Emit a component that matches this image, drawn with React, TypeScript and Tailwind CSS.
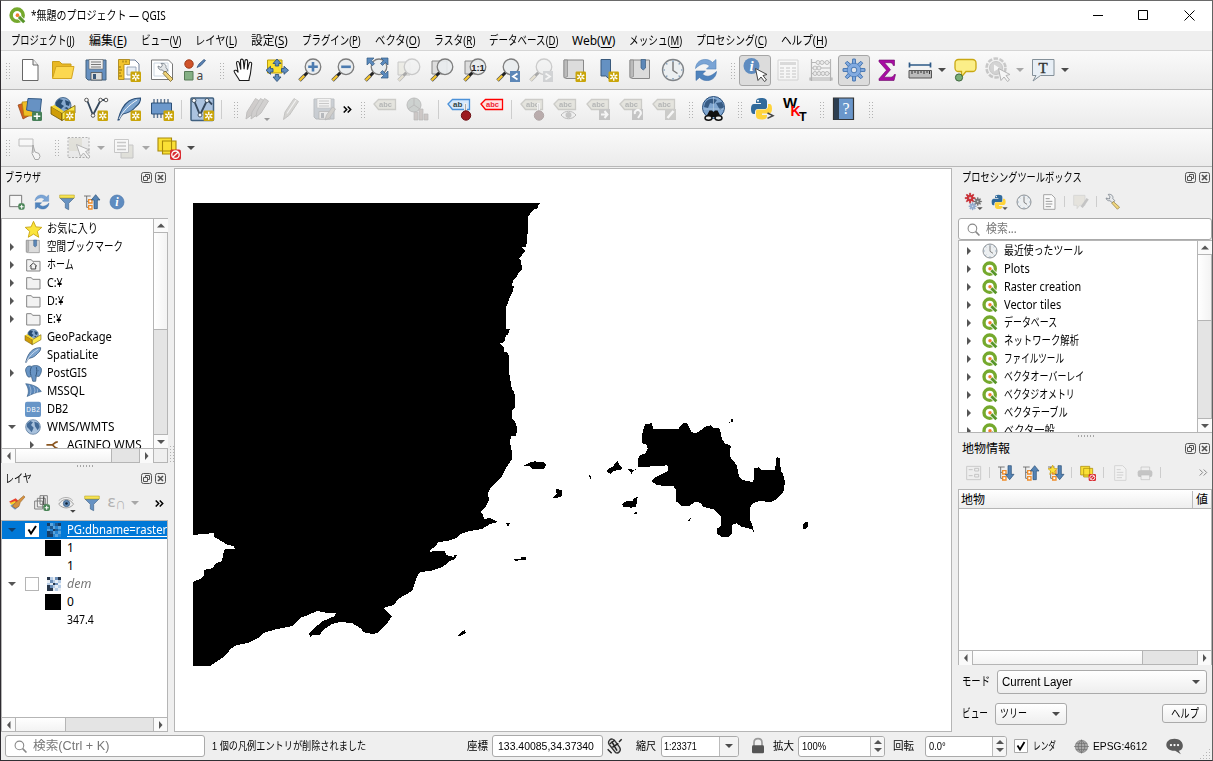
import { useLayoutEffect, useRef, useState } from 'react';
import type { ReactNode } from 'react';

/* Text squeezed or stretched horizontally to a given width, like narrow UI kana. */
function Fit({ w, children, className = '' }: { w: number; children: ReactNode; className?: string }) {
  const ref = useRef<HTMLSpanElement>(null);
  const [scale, setScale] = useState(1);
  useLayoutEffect(() => {
    if (ref.current) setScale(w / ref.current.offsetWidth);
  }, [w]);
  return (
    <span className={`inline-flex shrink-0 whitespace-nowrap ${className}`} style={{ width: w }}>
      <span ref={ref} className="inline-block shrink-0 origin-left" style={{ transform: `scaleX(${scale})` }}>
        {children}
      </span>
    </span>
  );
}

type IconProps = { children: ReactNode; s?: number; dim?: boolean };
function Ic({ children, s = 24, dim }: IconProps) {
  return (
    <svg viewBox="0 0 24 24" width={s} height={s} fill="none" className={`shrink-0 overflow-visible ${dim ? 'opacity-35 grayscale-[70%]' : ''}`}>
      {children}
    </svg>
  );
}

const Badge = () => (
  <g>
    <rect x="13.500" y="13.500" width="10.500" height="10.500" rx="1.2" fill="#c9a50a" />
    <path d="M18.750 14.800v8M15.300 16.800l7 4M22.300 16.800l-7 4" stroke="#fff" strokeWidth="1.400" />
    <circle cx="18.750" cy="18.800" r="1" fill="#c9a50a" />
  </g>
);

const Lens = ({ children, x = 15 }: { children?: ReactNode; x?: number }) => (
  <g transform={`translate(${x - 15} 0)`}>
    <path d="M9.5 14.5L6 18" stroke="#222" strokeWidth="3" />
    <path d="M6.5 17.5L1.5 22.5" stroke="#555" strokeWidth="3.6" />
    <path d="M6.2 17.7L1.7 22.2" stroke="#f6c62d" strokeWidth="2.2" />
    <circle cx="15" cy="8.8" r="7.8" fill="#e9ecee" fillOpacity=".9" stroke="#7d7d7d" strokeWidth="1.3" />
    {children}
  </g>
);

const NewDoc = () => <Ic><path d="M4.5 1.5h10.5l5 5.5v15.500h-15.500z" fill="#fff" stroke="#666" /><path d="M15 1.500V7h5" stroke="#666" fill="#eee" /></Ic>;
const OpenDir = () => <Ic><path d="M1.500 20V3.500h7l2.500 2.500h9V11" fill="#e9b824" stroke="#c79d1c" /><path d="M1.500 20.500L5 8.500h18L20.500 20.500z" fill="#fcd850" stroke="#d3a521" /></Ic>;
const SaveIc = ({ dim = false, pencil = false }) => <Ic dim={dim}><path d="M2 2h20v20H4l-2-2z" fill="#6690c0" stroke="#44627f" /><path d="M5 1.500h14v9.500H5z" fill="#eee" stroke="#666" strokeWidth=".6" /><path d="M7 4h10M7 6.500h10M7 9h10" stroke="#777" /><path d="M7 14.500h11v7.500H7z" fill="#ddd" stroke="#444" strokeWidth=".7" /><path d="M9 16h3v5H9z" fill="#3c5878" />{pencil && <path d="M13 23l1.500-5 6-8 3 2-6 9z" fill="#a09070" stroke="#555" strokeWidth=".8" />}</Ic>;
const NewLayout = () => <Ic><path d="M2 2h16l4 4v15H2z" fill="#fff" stroke="#6f7f98" /><path d="M1.500 1.500h11v5H7v15H1.500z" fill="#f2c42c" stroke="#a98412" strokeWidth=".8" /><path d="M10 9h9v8h-9z" fill="#e8eef5" stroke="#8595ab" strokeWidth=".8" /><path d="M2 9h2M2 12h3M2 15h2M2 18h3M6 2.500v2M9 2.500v2" stroke="#7a5e08" strokeWidth=".8" /><Badge /></Ic>;
const Wrench = ({ s = 24 }) => <Ic s={s}><path d="M3 7l4.500 1.500 1-3L6 2c4-1 7.500 2 6.500 6l3 3-3.500 3-3.500-3C5 11.500 3 9 3 7z" fill="#e8eaec" stroke="#6d7680" /><path d="M13 12l9 8-3 3-8-8.500z" fill="#f0d67e" stroke="#85702d" strokeWidth=".9" /></Ic>;
const LayoutMgr = () => <Ic><path d="M1.500 2h17l4 4v15.500h-21z" fill="#fff" stroke="#777" /><path d="M4 5h14v13H4z" stroke="#ccd6e0" /><path d="M8 8l3 1.500L12.500 7 11 5.500c3-.5 5.500 1 5 4l2 3-3.500 2-2-2.500C9.500 12.500 8 10.500 8 8z" fill="#e3e6e8" stroke="#6d7680" strokeWidth=".8" /><path d="M15 13l8 8-2.500 2.500-7.500-8z" fill="#efd277" stroke="#72602a" strokeWidth=".8" /></Ic>;
const StyleMgr = () => <Ic><circle cx="6" cy="6" r="4.200" fill="#d0532a" stroke="#9d3a18" /><path d="M14 9.500l2-3.500 5-4.500 1.500 1-4.500 5z" fill="#5a82b4" stroke="#34577f" strokeWidth=".8" /><path d="M1.500 13.500h8.500V22H1.500z" fill="#85b085" stroke="#567a56" /><text x="13.500" y="22" fontSize="12" fill="#444" fontFamily="Noto Sans">a</text></Ic>;
const Hand = () => <Ic><path d="M7.500 22.500C6 19 2.500 15.500 2 13c1-1.500 3-.8 4.200 1.500L4.500 5c0-1.800 2.200-2 2.700-.3l1.600 6.800L8.500 2.500c0-1.800 2.500-1.900 2.800 0l.8 8.600L13 2.800c.2-1.700 2.500-1.600 2.600.2l-.2 8.700 1.800-6.500c.5-1.500 2.700-1.100 2.500.6L18.500 15c-.3 3-1.500 5-1.500 7.500z" fill="#fff" stroke="#1a1a1a" strokeWidth="1.100" /></Ic>;
const PanSel = () => <Ic><path d="M2.500 2h14.500v13H2.500z" fill="#fbe02c" stroke="#bd9d0b" /><path d="M12 1l4 4.500h-2.300V8h-3.400V5.500H8zM12 23.500l-4-4.500h2.300v-2.500h3.400V19H16zM1 12.300l4.500-4v2.300H8V14H5.500v2.300zM23.500 12.300l-4.500-4v2.300h-2.500V14H19v2.300z" fill="#5f8dbf" stroke="#2f5379" strokeWidth=".9" /></Ic>;
const ZoomIn = () => <Ic><Lens><path d="M15 4v9.600M10.200 8.800h9.600" stroke="#4b7bb0" strokeWidth="2.600" /></Lens></Ic>;
const ZoomOut = () => <Ic><Lens><path d="M10.200 8.800h9.600" stroke="#4b7bb0" strokeWidth="2.600" /></Lens></Ic>;
const ZoomFull = () => <Ic><Lens /><path d="M3 0h7L7.500 2.700l3 3-2 2-3-3L3 7zM24 0v7l-2.500-2.500-3 3-2-2 3-3L17 0zM24 20h-7l2.500-2.500-3-3 2-2 3 3L24 13z" fill="#5b8abd" stroke="#315982" strokeWidth=".7" /></Ic>;
const ZoomSel = () => <Ic dim><path d="M1 4h12v13H1z" fill="#e3dfa5" stroke="#777" /><Lens /></Ic>;
const ZoomLayer = () => <Ic><path d="M2 3h15v13H2z" fill="#ddd" stroke="#888" /><Lens /></Ic>;
const ZoomNative = () => <Ic><path d="M2 3h15v13H2z" fill="#ddd" stroke="#888" /><Lens /><text x="15" y="12.500" fontSize="9.500" fontWeight="700" textAnchor="middle" fill="#222" fontFamily="Liberation Sans">1:1</text></Ic>;
const ZoomLast = () => <Ic><Lens /><path d="M14 13h10v11H14z" fill="#5d87b7" /><path d="M21.500 15.500L17 18.500l4.500 3" stroke="#fff" strokeWidth="1.800" /></Ic>;
const ZoomNext = () => <Ic dim><Lens /><path d="M14 13h10v11H14z" fill="#8fa0b0" /><path d="M16.500 15.500l4.500 3-4.500 3" stroke="#fff" strokeWidth="1.800" /></Ic>;
const MapBook = ({ s = 24, badge = false, mark = false }) => <Ic s={s}><path d="M2 2h19.500v18.500H5c-2 0-3-1-3-2.500z" fill="#dcdcdc" stroke="#888" /><path d="M2 2h3.500v16.500L2 20z" fill="#bbb" stroke="#888" strokeWidth=".7" />{mark && <path d="M13 1.500h4.500v8.500L15.200 12 13 10z" fill="#5c87b7" stroke="#385b80" strokeWidth=".7" />}{badge && <Badge />}</Ic>;
const NewBookmark = () => <Ic><path d="M6 1.500h9.500v20.500L10.700 18 6 18z" fill="#6591c2" stroke="#39597c" /><Badge /></Ic>;
const Clock = ({ s = 24 }) => <Ic s={s}><circle cx="12" cy="12" r="10.500" fill="#eceff1" stroke="#808488" strokeWidth="1.300" /><path d="M12 4v8.500l4.500 3" stroke="#777" strokeWidth="1.400" /><path d="M12 2.500v1.500M12 20v1.500M2.500 12H4M20 12h1.500M5.300 5.300l1 1M17.700 17.700l1 1M18.700 5.300l-1 1M5.300 18.700l1-1" stroke="#68a" strokeWidth="1.200" /></Ic>;
const Refresh = ({ s = 24 }) => <Ic s={s}><path d="M1.500 10.500C2 4 7 1 12 1.500c3 .2 5 1.500 6.500 3L22 1.500v9.500h-9.500L15.500 8C12 4.500 7 5 1.500 10.500z" fill="#7aa4d5" stroke="#5484ba" strokeWidth=".6" /><path d="M22.500 13.500C22 20 17 23 12 22.500c-3-.2-5-1.500-6.500-3L2 22.500V13h9.500L8.500 16C12 19.500 17 19 22.500 13.500z" fill="#4f83bd" stroke="#3e6fa8" strokeWidth=".6" /></Ic>;
const Cursor = () => <path d="M12.500 10.500l2.500 12 3-3.500 3.500 4.500 2-1.500-3.500-4.500 4-1z" fill="#fff" stroke="#444" />;
const Identify = () => <Ic><circle cx="8.500" cy="8" r="8" fill="#5f8cc0" /><text x="8.500" y="13" fontSize="15" fontStyle="italic" fontWeight="700" textAnchor="middle" fill="#fff" fontFamily="Liberation Serif">i</text><Cursor /></Ic>;
const TableIc = () => <Ic dim><path d="M2 2h20v20H2z" fill="#fff" stroke="#999" /><path d="M4 4h16v3H4z" fill="#aaa" /><path d="M4 10h4M10 10h4M16 10h4M4 13h4M10 13h4M16 13h4M4 16h4M10 16h4M16 16h4M4 19h4M10 19h4M16 19h4" stroke="#777" strokeWidth="1.200" /></Ic>;
const Abacus = () => <Ic dim><path d="M2.500 1v22M21.500 1v22M1 22h22v-2H1zM2.500 4.500h19M2.500 10h19M2.500 15.500h19" stroke="#444" strokeWidth="1.200" />{[[9, 4.500], [13, 4.500], [18, 4.500], [6, 10], [10, 10], [6, 15.500], [10, 15.500], [14, 15.500], [18, 15.500]].map(([x, y]) => <circle key={`${x}-${y}`} cx={x} cy={y} r="2" fill="#ddd" stroke="#555" />)}</Ic>;
const Gear = ({ fill = '#83abe0', stroke = '#3d6fae' }) => (
  <g>
    {[0, 45, 90, 135, 180, 225, 270, 315].map((a) => <path key={a} d="M10.300 6l.4-5h2.600l.4 5z" fill={fill} stroke={stroke} strokeWidth=".9" transform={`rotate(${a} 12 12)`} />)}
    <circle cx="12" cy="12" r="6.800" fill={fill} stroke={stroke} strokeWidth=".6" />
    <circle cx="12" cy="12" r="2.800" fill="#e2e5ea" stroke={stroke} strokeWidth=".9" />
  </g>
);
const Sigma = () => <Ic><path d="M4 2h15.500v5.500h-1.300C17.700 5.500 17 4.700 15 4.700H9.500l6 7-6.500 7.500h6.500c2 0 3-.8 3.700-2.700h1.300L19 22.500H4v-1.700l7.500-8.600L4 3.700z" fill="#a80ca2" stroke="#6b0a68" strokeWidth=".6" /></Ic>;
const Measure = () => <Ic><path d="M1.500 4.500v5M22.500 4.500v5M2 7h20" stroke="#2d5986" strokeWidth="1.700" /><path d="M1 12.500h22.500v7.500H1z" fill="#bbb" stroke="#555" /><path d="M4 13v3M7 13v2M10 13v3M13 13v2M16 13v3M19 13v2M21.500 13v3" stroke="#333" /></Ic>;
const Tip = () => <Ic><path d="M5.500 1.500h14a3.500 3.500 0 013.500 3.500v5a3.500 3.500 0 01-3.500 3.500H13L8.500 19v-5.500h-3A3.500 3.500 0 012 10V5a3.500 3.500 0 013.500-3.500z" fill="#fbee88" stroke="#c9a812" strokeWidth="1.300" /><circle cx="6" cy="19.500" r="3.600" fill="#7aae78" stroke="#3c663c" /></Ic>;
const Action = () => <Ic dim><g transform="translate(-2 -2)"><circle cx="12" cy="12" r="9.500" fill="#e6e6e6" stroke="#777" strokeWidth="2.500" strokeDasharray="4.500 1.500" /><circle cx="12" cy="12" r="6.500" fill="#999" stroke="#777" /><path d="M10 8.500v7l5.500-3.500z" fill="#fff" /></g><Cursor /></Ic>;
const TextAnn = () => <Ic><path d="M1.500 1.500h21.500v16H9.500L2 23l3-5.500H1.500z" fill="#e8eff6" stroke="#849099" /><text x="12.200" y="15" fontSize="15" textAnchor="middle" fill="#333" stroke="#333" strokeWidth=".4" fontFamily="Liberation Serif">T</text></Ic>;

const AddLayers = () => <Ic><path d="M0 8l9-3 5 12-9 5z" fill="#d4611f" stroke="#8e4015" strokeWidth=".7" /><path d="M4 5l13-1 1 15H6z" fill="#efbe25" stroke="#a97f0b" strokeWidth=".7" /><path d="M10 1.500l13.500.5-1.500 14L8.500 13z" fill="#6792c3" stroke="#345a84" /><rect x="14" y="14.500" width="10" height="9.500" rx="1.500" fill="#468058" /><path d="M19 16v6.500M15.700 19.200h6.600" stroke="#fff" strokeWidth="1.500" /></Ic>;
const GeoPkg = ({ s = 24, badge = false }) => <Ic s={s}><circle cx="12" cy="8.500" r="8" fill="#87a9cf" stroke="#30557c" strokeWidth=".8" /><path d="M5 5l3-3 4 1-2 4 3 2-3 3-5-3zM14 3l5 2-1 4-3-1zM13 11l3-1 2 3z" fill="#284c72" /><path d="M0 9.500l11 6.500v7.500L0 17z" fill="#cf9d08" stroke="#6d5306" strokeWidth=".8" /><path d="M24 8.500l-13 7.500v7.500L24 16z" fill="#fbe94c" stroke="#6d5306" strokeWidth=".8" /><path d="M0 9.500L3.500 8 13 14.500 11 16z" fill="#f5d62e" />{badge && <Badge />}</Ic>;
const VectorV = () => <Ic><path d="M3 3l6 15L16.500 3.500M17 3h4.500" stroke="#34475c" strokeWidth="1.800" />{[[2.500, 3], [9, 18.500], [16.500, 3], [22, 3]].map(([x, y]) => <circle key={x} cx={x} cy={y} r="1.800" fill="#fff" stroke="#555" />)}<Badge /></Ic>;
const VirtualV = () => <Ic><rect x="1" y="1" width="22.500" height="22.500" rx="1" fill="#abc3e0" stroke="#40607f" strokeWidth="1.500" /><path d="M4 3.500l6 14.500 7-14.500c2 0 3 2 5 4" stroke="#34475c" strokeWidth="1.900" />{[[4, 3.500], [10, 18], [17, 3.500]].map(([x, y]) => <circle key={x} cx={x} cy={y} r="2" fill="#fff" stroke="#456" />)}<Badge /></Ic>;
const Feather = ({ s = 24, badge = false }) => <Ic s={s}><path d="M1 23C3 15 6 8 12 4c4-2.500 8-3 11.500-3C24 5 21 8 18.500 10c-4 5-8 6-12.500 7-2 1.500-3 4-4 6z" fill="#7ba3ce" stroke="#2c4f77" strokeWidth="1.100" /><path d="M2 22C6 14 12 8 20 3" stroke="#fff" strokeWidth=".9" />{badge && <Badge />}</Ic>;
const Chip = () => <Ic><path d="M4 2v19M7.500 2v19M11 2v19M14.500 2v19M18 2v19" stroke="#5a7390" strokeWidth="1.400" /><path d="M1.500 6h20v11h-20z" fill="#6c98cb" stroke="#2d5077" /><Badge /></Ic>;
const Pencil = ({ x = 0 }) => <g transform={`translate(${x} 0)`}><path d="M4.500 22.500l1.500-7.500L15 1.500l4.500 3L10.500 18z" fill="#a39c84" stroke="#6a665a" strokeWidth=".9" /><path d="M8 16.500L17 3" stroke="#eee" strokeWidth="1.200" /></g>;
const Pencils = () => <Ic dim><g strokeLinejoin="round"><path d="M0 22l1-7L9.500 1.500l4 2.500L5.500 18z" fill="#9b8078" stroke="#6a605a" /><path d="M5 22l1-7L14.500 1.500l4 2.500-8 14z" fill="#9b8f88" stroke="#6a605a" /><path d="M10 20l1-6L18.500 1.500l4 2.500-7.500 12z" fill="#9b8f88" stroke="#6a605a" /></g><path d="M18 21h6l-3 3z" fill="#000" /></Ic>;
const LabelTag = ({ red = false, blue = false, dim = false, children }: { red?: boolean; blue?: boolean; dim?: boolean; children?: ReactNode }) => (
  <Ic dim={dim}>
    <path d="M1 7l4.500-4.500h17v10H5.500z" fill={red ? '#ffe0e0' : blue ? '#d6e8fb' : '#cdca8f'} stroke={red ? '#f00' : blue ? '#4b91d8' : '#85825e'} strokeWidth="1.300" />
    <text x="6" y="10" fontSize={blue ? 8 : 7.5} fontWeight="700" fill={red ? '#e23' : '#344'} fontFamily="Liberation Sans">{blue ? 'ab' : 'abc'}</text>
    {children}
  </Ic>
);
const Pie = () => <Ic dim><circle cx="8" cy="8" r="7" fill="#6f9a83" stroke="#555" /><path d="M8 8V1M8 8l-6 4M8 8l6 4" stroke="#555" /><path d="M8 15h4v8H8zM13 12h4v11h-4zM18 17h4v6h-4z" fill="#a76" stroke="#555" strokeWidth=".7" /></Ic>;
const PinBall = () => <g><path d="M18.500 14V6" stroke="#eee" strokeWidth="3" /><path d="M18.500 14V7" stroke="#999" strokeWidth=".8" /><circle cx="19" cy="18.500" r="4.700" fill="#9d1b20" stroke="#6b1014" /></g>;
const Bino = () => <Ic><circle cx="12.500" cy="10.500" r="11" fill="#7fa5cf" stroke="#294d78" /><path d="M4 6c3-5 8-5 12-3l-3 4-4-1-2 5-4-1zM15 6l6-1 2 5-4 3z" fill="#375b84" /><path d="M2 12h21M12.500 0v14" stroke="#bcd1e6" strokeWidth=".6" /><path d="M4.500 21l4-7.500h2.500l1.500 1.500 1.500-1.500h2.500l4 7.500-3 1-3-2h-4l-3 2z" fill="#111" /><ellipse cx="7.500" cy="21" rx="3.500" ry="2.200" fill="#eee" stroke="#111" strokeWidth="1.500" /><ellipse cx="17.500" cy="21" rx="3.500" ry="2.200" fill="#eee" stroke="#111" strokeWidth="1.500" /></Ic>;
const Python = ({ s = 24, prompt = false }) => <Ic s={s}><path d="M11 1c4 0 6 1 6 3.500V10c0 1.500-1 2-2.500 2H8c-2 0-3 1-3 3v2H3.500C1.500 17 1 14 1 11.500S2 7 4 7h7V6H6V4c0-2 2-3 5-3z" fill="#316a9b" /><path d="M12 22.500c-4 0-6-1-6-3.500v-4.500C6 13 7 12.500 8.500 12.500H15c2 0 3-1.500 3-3V7h1.500c2 0 2.500 2.500 2.500 5s-1 4.500-3 4.500h-7v1.500h5V19c0 2.500-2 3.500-5 3.500z" fill="#ffd43b" /><circle cx="8" cy="3.800" r="1" fill="#fff" />{prompt ? <path d="M17.500 16l5.500 2.700-5.500 2.700" stroke="#444" strokeWidth="1.500" /> : <path d="M17 20h8l-4 4z" fill="#555" />}</Ic>;
const Wkt = () => <Ic><g fontFamily="Liberation Sans" fontWeight="700"><text x="0" y="10.500" fontSize="15" fill="#000">W</text><text x="7.500" y="18.500" fontSize="14" fill="#f00">K</text><text x="16" y="23.500" fontSize="12.500" fill="#000">T</text></g></Ic>;
const Book = () => <Ic><path d="M1.500 1h20v21.500h-20z" fill="#6a96ca" stroke="#333" strokeWidth="1.200" /><path d="M2 1h5v21.500H2z" fill="#2d3e50" /><text x="14" y="17" fontSize="16" textAnchor="middle" fill="#fff" fontFamily="Liberation Serif">?</text></Ic>;
const RectHand = () => <Ic dim><path d="M1 3h14v7H1z" fill="#fff" stroke="#555" /><path d="M15 9v8M15 9l2 7 4 1.500 1 3-1.500 3H17l-3-6z" stroke="#222" fill="#fff" /></Ic>;
const SelectIc = () => <Ic dim><path d="M1 1.500h21v20H1z" fill="#ddd" stroke="#333" strokeDasharray="2 1.500" /><path d="M2 2h13v13H2z" fill="#c4c080" /><path d="M9.500 8.500l4 12 3-3.500 4.500 5.500 2-1.500-4.500-5.500 4-1.500z" fill="#fff" stroke="#444" /></Ic>;
const FormSel = () => <Ic dim><path d="M9 9h12v13H9z" fill="#c9c58a" stroke="#777" /><path d="M2.500 3.500h14v13h-14z" fill="#fff" stroke="#777" /><path d="M5 6.500h9M5 10h9M5 13.500h9" stroke="#777" strokeWidth="1.500" /></Ic>;
const Deselect = ({ s = 24 }) => <Ic s={s}><path d="M1 2h13.500v13H1zM5.500 5h13.500v13H5.500z" fill="#fae035" stroke="#a88909" strokeWidth="1.100" /><rect x="13" y="13.500" width="11" height="10.500" rx="2" fill="#d92b31" /><circle cx="18.500" cy="18.700" r="3.700" stroke="#fff" strokeWidth="1.300" /><path d="M16 21l5-4.700" stroke="#fff" strokeWidth="1.300" /></Ic>;

const Folder = ({ home = false }) => <Ic s={16}><path d="M2.500 4h7l2 2.500h11v14.500H2.500z" fill="#f2f2f2" stroke="#858585" strokeWidth="1.500" />{home && <path d="M7 14l5.500-5 5.500 5M9 13v5h7v-5" stroke="#444" strokeWidth="1.500" />}</Ic>;
const Star = () => <Ic s={17}><path d="M12 .5l3.400 7.800 8.300.7-6.300 5.600 2 8.400L12 18.500 4.600 23l2-8.400L.3 9l8.300-.7z" fill="#fbe53c" stroke="#c9a50f" strokeWidth="1.300" /></Ic>;
const Elephant = () => <Ic s={17}><path d="M1 9C0 3 5 0 9 2c5-2 11-2 14 3 1 4-1 8-3 11h-4l-1 7h-4l-2-7c-3 2-5 1-6-1z" fill="#6894c4" stroke="#2f5378" /><path d="M9 3c-2 4-2 8-.5 12M16 3c1 4 1 9-1 13M18 8h1" stroke="#2f5378" strokeWidth="1.300" /></Ic>;
const Mssql = () => <Ic s={17}><path d="M1 1c9 1 18 4 22 11-7 1-14 4-20 7 3-6 2-12-2-18z" fill="#5a87b9" stroke="#44698f" /><path d="M6 3c3 5 3 10 1 14M12 5c3 4 2 7 1 10M17 8c1 2 1 4 0 6" stroke="#b9cde4" /></Ic>;
const Db2 = () => <Ic s={16}><rect x="0" y="1" width="24" height="23" rx="3" fill="#6795c7" /><text x="12" y="16" fontSize="9.500" textAnchor="middle" fill="#fff" fontFamily="Liberation Sans" textLength="20">DB2</text></Ic>;
const Globe = ({ s = 16 }) => <Ic s={s}><circle cx="12" cy="12" r="11" fill="#a8c1dc" stroke="#47698f" /><path d="M3 7l5-4 4 2-3 4 4 4-3 7-4-5-3-3zM14 4l6 2 2 6-3 5-4-6z" fill="#426a97" /></Ic>;
const Wire = () => <Ic s={17}><path d="M2 11h8c2 0 3-4 8-4M10 11c2 0 3 5 8 5" stroke="#8a5620" strokeWidth="2.400" /></Ic>;
const QLogo = ({ s = 17 }) => <Ic s={s}><circle cx="11.500" cy="11.500" r="8.500" stroke="#75a92d" strokeWidth="5" /><path d="M13.500 13.500l8 8" stroke="#fff" strokeWidth="6.500" /><path d="M14 14l7.500 7.500" stroke="#579529" strokeWidth="4.300" /><circle cx="12" cy="11.500" r="2.600" fill="#ef7f2e" /></Ic>;
const RasterIc = ({ blue = false }) => <svg width="14" height="14" viewBox="0 0 20 20" className="shrink-0" shapeRendering="crispEdges">{['01320', '32131', '13023', '02131', '00313'].map((row, y) => row.split('').map((c, x) => <rect key={`${x}${y}`} x={x * 4} y={y * 4} width="4" height="4" fill={(blue ? ['#173c63', '#5ba4dc', '#1d5992', '#2484d2'] : ['#27364a', '#b7cce5', '#6d8fb8', '#e8eef5'])[Number(c)]} />))}</svg>;
const Funnel = () => <Ic s={16}><path d="M1.500 6h21l-8 8v9.500l-5-2.500v-7z" fill="#6792c2" stroke="#44668b" /><path d="M1 1.500h22v4.500H1z" fill="#f6e354" stroke="#af9b23" strokeWidth=".8" /></Ic>;
const TreeArrow = ({ down = false, star = false }) => <Ic s={16}><path d="M0 3h10M4 3v17h6M4 11h6" stroke="#666" strokeWidth="1.300" /><path d="M7 8.500h5v5H7zM7 17.500h5v5H7z" fill="#fff" stroke="#ef8d2b" strokeWidth="2" />{star && <path d="M7 0l2 5 5 .5-4 3.500 1.500 5L7 11l-4.500 3L4 9 0 5.500 5 5z" fill="#fce23a" stroke="#cc9d0c" />}{down ? <path d="M15 1h5v13h4l-6.500 8L11 14h4z" fill="#5583b4" stroke="#264b72" /> : <path d="M15 22V9h-4L17.500 1 24 9h-4v13z" fill="#5583b4" stroke="#264b72" />}</Ic>;
const Info = () => <Ic s={16}><circle cx="12" cy="12" r="10.500" fill="#5f8cc0" stroke="#4a76aa" /><text x="12" y="18.500" fontSize="18" fontStyle="italic" fontWeight="700" textAnchor="middle" fill="#fff" fontFamily="Liberation Serif">i</text></Ic>;
const AddBox = () => <Ic s={16}><path d="M1 2h18v17H1z" fill="#f6f6f6" stroke="#666" strokeWidth="1.300" /><rect x="14" y="14" width="9.500" height="9.500" rx="3" fill="#498456" /><path d="M19 16v6M16 19h6" stroke="#fff" strokeWidth="1.600" /></Ic>;
const Search = () => <Ic s={13}><circle cx="10" cy="10" r="8" stroke="#888" strokeWidth="2" /><path d="M16 16l7 7" stroke="#888" strokeWidth="3" /></Ic>;
const Brush = () => <Ic s={16}><path d="M0 10l10-5 6 6-7 6z" fill="#e8402e" /><path d="M1 12l8-3 4 5-6 4z" fill="#f6d02b" /><path d="M2 16l7-4 6 5-6 5z" fill="#6b95ca" /><path d="M9 12l5-4 8-7 2 2-7 8-2 6-5 3-5-3z" fill="#d7913e" stroke="#8d5f28" strokeWidth=".8" /></Ic>;
const GroupAdd = () => <Ic s={16}><path d="M1 9h12v12H1zM5 5h12v13H5zM9 1h11v13H9z" fill="#f1f1f1" stroke="#777" strokeWidth="1.400" /><path d="M14.500 2v13" stroke="#555" strokeWidth="2" /><rect x="14" y="14" width="10" height="10" rx="3" fill="#498456" /><path d="M19 16v6M16 19h6" stroke="#fff" strokeWidth="1.600" /></Ic>;
const Eye = () => <Ic s={17}><path d="M1 13c6-9 15-9 21 0-6 7-15 7-21 0z" fill="#eee" stroke="#999" strokeWidth="1.300" /><path d="M1 8c6-6 15-6 20 0" stroke="#aaa" strokeWidth="1.300" /><circle cx="12" cy="12" r="4.500" fill="#6088b3" stroke="#345a84" /><circle cx="12" cy="12" r="1.800" fill="#123" /><path d="M17 21h8l-4 4z" fill="#444" /></Ic>;
const Gears = () => <Ic s={17}><g transform="scale(.65) translate(-1 -1)"><Gear fill="#d22f35" stroke="#b3242b" /></g><g transform="translate(12 6) scale(.5)"><Gear fill="#777" stroke="#555" /></g><g transform="translate(5 13) scale(.48)"><Gear fill="#94add0" stroke="#7190b9" /></g><path d="M17 20h8l-4 4z" fill="#555" /></Ic>;
const PageIc = ({ dim = false }) => <Ic s={16} dim={dim}><path d="M4 1h12l5 5v17H4z" fill="#fafafa" stroke="#999" strokeWidth="1.300" /><path d="M7 7h6M7 11h10M7 15h10M7 19h8" stroke="#999" strokeWidth="1.500" /></Ic>;
const EditNote = () => <Ic s={16} dim><path d="M1 2h17v15H10l-4 5v-5H1z" fill="#ddd097" stroke="#999" /><path d="M13 20L22 7" stroke="#777" strokeWidth="4" /></Ic>;
const Form = () => <Ic s={16} dim><path d="M1 2h21v20H1z" fill="#eee" stroke="#888" strokeWidth="1.500" /><path d="M4 7h6M4 16h6M13 5h6v4h-6zM13 14h6v4h-6z" stroke="#777" strokeWidth="1.500" /></Ic>;
const Printer = () => <Ic s={16} dim><path d="M6 3h13v6H6z" fill="#eee" stroke="#666" /><rect x="1" y="8" width="22" height="10" rx="3" fill="#777" /><path d="M6 15h13v7H6z" fill="#eee" stroke="#666" /></Ic>;

function Handle() {
  return <span className="h-[17px] w-[5px] shrink-0 bg-[radial-gradient(circle,#b2b2b2_0.7px,transparent_0.9px)] bg-[length:3px_3px]" />;
}
const HandleSlot = ({ w = 'w-4' }: { w?: string }) => <span className={`flex shrink-0 justify-end pr-[3px] ${w}`}><Handle /></span>;
const Cell = ({ children }: { children: ReactNode }) => <span className="flex w-[33px] shrink-0 justify-center">{children}</span>;
const Sm = ({ children }: { children: ReactNode }) => <span className="flex w-[25px] shrink-0 justify-center">{children}</span>;
const Pressed = ({ children }: { children: ReactNode }) => <span className="flex w-[33px] shrink-0 justify-center"><span className="flex h-[31px] w-8 shrink-0 items-center justify-center rounded-[3px] border border-[#a6a6a6] bg-[#dcdcdc]">{children}</span></span>;
const Sep = ({ w = 'w-[7px]', small = false }: { w?: string; small?: boolean }) => <span className={`flex shrink-0 justify-center ${w}`}><span className={`w-px bg-[#cdcdcd] ${small ? 'h-[11px]' : 'h-[19px]'}`} /></span>;
const More = ({ dim = false }) => (
  <svg width="9" height="7" viewBox="0 0 9 7" fill="none" className="shrink-0"><path d="M.700.500l3 3-3 3M4.700.500l3 3-3 3" stroke={dim ? '#888' : '#000'} strokeWidth={dim ? 1 : 1.5} /></svg>
);
const Down = ({ dim = false }) => (
  <svg viewBox="0 0 12 6" width="12" height="6" className="shrink-0"><path d="M2 1h8L6 5z" fill={dim ? '#a7a7a7' : '#4b4b4b'} /></svg>
);
const Bar = ({ children, h = 'h-[39px]' }: { children: ReactNode; h?: string }) => <div className={`flex shrink-0 items-center border-b border-[#b8b8b8] bg-linear-to-b from-[#fafafa] to-[#ebebeb] ${h}`}>{children}</div>;

const menus: [string, string, number][] = [
  ['プロジェクト', 'J', 64], ['編集', 'E', 38], ['ビュー', 'V', 40], ['レイヤ', 'L', 42], ['設定', 'S', 37], ['プラグイン', 'P', 59], ['ベクタ', 'O', 45],
  ['ラスタ', 'R', 41], ['データベース', 'D', 69], ['Web', 'W', 43], ['メッシュ', 'M', 53], ['プロセシング', 'C', 71], ['ヘルプ', 'H', 46],
];

function DockTitle({ text, w }: { text: string; w: number }) {
  return (
    <div className="flex h-[21px] shrink-0 items-center pl-1">
      <Fit w={w}>{text}</Fit>
      <span className="ml-auto flex gap-[3px] pr-[2px]">
        <svg width="11" height="11" viewBox="0 0 11 11" fill="none" stroke="#555"><rect x=".5" y=".5" width="10" height="10" rx="2" /><path d="M2.500 4.500h4v4h-4zM4.500 4V2.500h4v4H7" /></svg>
        <svg width="11" height="11" viewBox="0 0 11 11" fill="none" stroke="#555"><rect x=".5" y=".5" width="10" height="10" rx="2" /><path d="M3 3l5 5M8 3L3 8" strokeWidth="1.700" /></svg>
      </span>
    </div>
  );
}

const arrows = { up: 'M0 5.500h8L4 1.500z', down: 'M0 2h8L4 6z', left: 'M5.500 0v8L2 4z', right: 'M2 0v8l3.500-4z' };
function SBtn({ d, className = '' }: { d: keyof typeof arrows; className?: string }) {
  return <span className={`flex size-[14px] shrink-0 items-center justify-center bg-[#fafafa] ${className}`}><svg width="8" height="8" viewBox="0 0 8 8"><path d={arrows[d]} fill="#555" /></svg></span>;
}
function VBar({ thumb }: { thumb: string }) {
  return (
    <div className="flex w-[14px] shrink-0 flex-col border-l border-[#b5b5b5] bg-[#e4e4e4]">
      <SBtn d="up" className="border-b border-[#b5b5b5]" />
      <span className={`border-b border-[#b5b5b5] bg-linear-to-r from-white to-[#f3f3f3] ${thumb}`} />
      <SBtn d="down" className="mt-auto border-t border-[#b5b5b5]" />
    </div>
  );
}
function HBar({ thumb, corner = false }: { thumb: string; corner?: boolean }) {
  return (
    <div className="flex h-[14px] shrink-0 border-t border-[#b5b5b5] bg-[#e4e4e4]">
      <SBtn d="left" className="border-r border-[#b5b5b5]" />
      <span className={`border-r border-[#b5b5b5] bg-linear-to-b from-white to-[#f3f3f3] ${thumb}`} />
      <SBtn d="right" className="ml-auto border-l border-[#b5b5b5]" />
      {corner && <span className="w-[14px] shrink-0 border-l border-[#b5b5b5] bg-[#efefef]" />}
    </div>
  );
}
const Dots = () => <div className="flex h-[5px] shrink-0 items-center justify-center"><span className="h-[2px] w-[17px] bg-[radial-gradient(circle,#a5a5a5_0.7px,transparent_0.9px)] bg-[length:3px_2px]" /></div>;
const Branch = ({ open = false, white = false }) => <svg width="8" height="8" viewBox="0 0 8 8" className="shrink-0"><path d={open ? 'M0 2h8L4 6z' : 'M2 0v8l4-4z'} fill={white ? '#123e6b' : '#555'} /></svg>;

const browser: [string, number, ReactNode, string][] = [
  ['お気に入り', 51, <Star />, ''], ['空間ブックマーク', 76, <MapBook s={16} mark />, 'c'], ['ホーム', 27, <Folder home />, 'c'], ['C:¥', 16, <Folder />, 'c'],
  ['D:¥', 17, <Folder />, 'c'], ['E:¥', 15, <Folder />, 'c'], ['GeoPackage', 65, <GeoPkg s={16} />, ''], ['SpatiaLite', 51, <Feather s={16} />, ''],
  ['PostGIS', 40, <Elephant />, 'c'], ['MSSQL', 38, <Mssql />, ''], ['DB2', 21, <Db2 />, ''], ['WMS/WMTS', 67, <Globe />, 'o'],
];
const tools: [string, number][] = [
  ['最近使ったツール', 79], ['Plots', 26], ['Raster creation', 77], ['Vector tiles', 57], ['データベース', 53], ['ネットワーク解析', 75], ['ファイルツール', 60],
  ['ベクタオーバーレイ', 80], ['ベクタジオメトリ', 71], ['ベクタテーブル', 64], ['ベクタ一般', 51],
];

const shore =
  '193,203 540,203 538,205 538,208 535,209 532,211 530,214 528,216 528,226 527,242 526,247 522,247 525,251 522,255 519,259 521,261 522,269 519,272 517,276 513,281 512,286 514,286 513,291 511,295 509,299 508,303 506,307 506,329 510,329 508,335 506,335 505,340 503,343 500,343 502,346 504,347 504,352 507,352 509,356 509,372 510,378 512,390 514,391 515,396 515,408 512,410 512,418 515,422 517,427 517,430 516,436 511,436 510,443 512,452 512,459 508,465 505,470 502,476 497,482 491,487 488,493 489,500 486,506 483,509 480,512 483,515 484,519 490,518 498,522 490,524 482,529 470,531 460,534 457,538 447,541 438,542 436,546 429,551 431,553 432,551 445,551 446,555 449,556 454,557 454,555 457,555 455,559 449,561 447,564 440,568 430,571 420,572 417,577 415,583 412,591 405,595 398,599 394,605 383,608 387,612 392,616 388,622 384,627 377,633 372,634 363,632 362,629 352,623 340,622 332,624 323,630 320,635 312,635 310,637 309,633 313,629 323,621 335,616 336,613 327,613 317,611 308,615 300,618 292,626 277,629 263,633 260,637 248,643 237,645 230,649 228,653 222,658 210,666 193,666 193,582 200,579 204,575 204,570 213,568 216,563 222,561 223,555 225,549 235,549 234,546 228,545 218,539 214,537 214,533 193,535';
const isles = [
  '435,72 455,70 460,86 495,88 535,87 548,70 562,70 575,97 590,99 620,78 632,76 640,83 660,86 665,115 675,130 692,137 690,170 710,195 717,230 727,240 745,243 757,248 762,235 763,205 775,202 783,210 825,210 830,172 840,173 842,210 850,225 855,245 850,275 830,298 815,305 775,304 758,310 750,325 750,360 757,375 762,397 755,388 725,380 710,370 698,372 695,400 685,412 665,410 652,402 652,385 663,378 662,350 640,328 610,320 600,308 585,306 568,318 545,317 527,303 527,268 520,258 470,256 455,243 465,232 495,218 505,212 502,196 470,198 415,202 413,180 420,165 437,160 443,145 440,135 425,128 427,100',
  '72,197 90,188 103,184 112,185 135,188 138,196 133,206 95,206 90,199', '320,211 340,198 352,182 358,193 367,203 365,208 340,213 332,222 322,217', '385,208 405,209 416,202 398,215 395,222', '267,225 272,230 273,239 270,236',
  '157,293 170,282 167,267 186,270 186,288 172,293', '366,312 380,303 398,303 403,293 413,292 408,320 395,323 370,320', '400,338 411,337 409,343 403,342', '564,364 568,357 573,354 570,362', '685,68 692,65 694,58 699,58 697,67',
  '908,374 918,364 924,367 923,380 916,387 908,386', '17,369 31,369 24,381', '42,478 63,476 63,471 78,471 78,480 45,482', '-126,707 -118,697 -105,690 -102,699 -112,704 -122,709',
];

function Combo({ w, tw, text }: { w: string; tw: number; text: string }) {
  return <div className={`flex items-center rounded-[3px] border border-[#aaa] bg-linear-to-b from-white to-[#eee] pl-1 pr-1 ${w}`}><Fit w={tw}>{text}</Fit><span className="ml-auto flex"><Down /></span></div>;
}
function Spin({ w, tw, text }: { w: string; tw: number; text: string }) {
  return (
    <div className={`flex h-[21px] shrink-0 overflow-hidden rounded-[3px] border border-[#aaa] bg-white ${w}`}>
      <span className="flex items-center pl-[3px]"><Fit w={tw}>{text}</Fit></span>
      <span className="ml-auto flex w-[14px] items-center justify-center border-l border-[#bbb] bg-[#f6f6f6]"><svg width="8" height="14" viewBox="0 0 8 14"><path d="M0 5h8L4 1zM0 9h8l-4 4z" fill="#555" /></svg></span>
    </div>
  );
}

export default function App() {
  return (
    <div className="flex h-[761px] w-[1213px] flex-col overflow-hidden border border-t-[#6a6a6a] border-r-[#626262] border-b-[#303034] border-l-[#2e2b30] bg-[#efefef] font-['Noto_Sans','Noto_Sans_CJK_JP',sans-serif] text-[12px] leading-[18px] text-black">
      <header className="flex h-[30px] shrink-0 items-center bg-white pb-px pl-2">
        <QLogo s={17} />
        <Fit w={135} className="ml-[5px]">*無題のプロジェクト — QGIS</Fit>
        <div className="ml-auto flex items-center gap-[35px] pr-[17px]">
          <svg width="10" height="11" stroke="#000"><path d="M0 5.500h10" /></svg>
          <svg width="11" height="11" fill="none" stroke="#000"><path d="M.5.500h9v9h-9z" /></svg>
          <svg width="11" height="11" stroke="#000"><path d="M.500.500l10 10M10.500.500l-10 10" /></svg>
        </div>
      </header>
      <nav className="flex h-5 shrink-0 items-center gap-[14px] border-b border-[#d5d5d5] pl-[10px]">
        {menus.map(([t, k, w]) => <Fit key={t} w={w}>{t}(<span className="underline underline-offset-2">{k}</span>)</Fit>)}
      </nav>

      <Bar>
        <HandleSlot w="w-3" />
        <Cell><NewDoc /></Cell><Cell><OpenDir /></Cell><Cell><SaveIc /></Cell><Cell><NewLayout /></Cell><Cell><LayoutMgr /></Cell><Cell><StyleMgr /></Cell>
        <HandleSlot />
        <Cell><Hand /></Cell><Cell><PanSel /></Cell><Cell><ZoomIn /></Cell><Cell><ZoomOut /></Cell><Cell><ZoomFull /></Cell><Cell><ZoomSel /></Cell><Cell><ZoomLayer /></Cell><Cell><ZoomNative /></Cell><Cell><ZoomLast /></Cell><Cell><ZoomNext /></Cell><Cell><MapBook badge /></Cell><Cell><NewBookmark /></Cell><Cell><MapBook mark /></Cell><Cell><Clock /></Cell><Cell><Refresh /></Cell>
        <HandleSlot />
        <Pressed><Identify /></Pressed><Cell><TableIc /></Cell><Cell><Abacus /></Cell><Pressed><Ic><Gear /></Ic></Pressed><Cell><Sigma /></Cell><Cell><Measure /></Cell><Down /><Cell><Tip /></Cell><Cell><Action /></Cell><Down dim /><Cell><TextAnn /></Cell><Down />
      </Bar>
      <Bar>
        <HandleSlot w="w-3" />
        <Cell><AddLayers /></Cell><Cell><GeoPkg badge /></Cell><Cell><VectorV /></Cell><Cell><Feather badge /></Cell><Cell><Chip /></Cell><Sep /><Cell><VirtualV /></Cell><Sep />
        <HandleSlot />
        <Cell><Pencils /></Cell><Cell><Ic dim><Pencil /></Ic></Cell><Cell><SaveIc dim pencil /></Cell><span className="flex w-[15px] justify-center"><More /></span>
        <HandleSlot w="w-[13px]" />
        <Cell><LabelTag dim /></Cell><Cell><Pie /></Cell><Sep w="w-2" /><Cell><LabelTag blue><PinBall /></LabelTag></Cell><Cell><LabelTag red /></Cell><Sep />
        <Cell><LabelTag dim><PinBall /></LabelTag></Cell>
        <Cell><LabelTag dim><path d="M8 18c4-5 11-5 15 0-4 5-11 5-15 0z" fill="#eee" stroke="#555" /><circle cx="15.500" cy="18" r="3" fill="#777" /></LabelTag></Cell>
        <Cell><LabelTag dim><path d="M13 12h11v11H13z" fill="#777" /><path d="M15 17.500h6M18.500 14l3 3.500-3 3.500" stroke="#fff" strokeWidth="2" /></LabelTag></Cell>
        <Cell><LabelTag dim><path d="M13 12h11v11H13z" fill="#777" /><path d="M16 17a3 3 0 115 1l-2 3" stroke="#fff" strokeWidth="2" /></LabelTag></Cell>
        <Cell><LabelTag dim><path d="M13 12h11v11H13z" fill="#887" /><path d="M15.500 21l6-7" stroke="#fff" strokeWidth="2.500" /></LabelTag></Cell>
        <HandleSlot /><Cell><Bino /></Cell><HandleSlot /><Cell><Python prompt /></Cell><Cell><Wkt /></Cell><HandleSlot /><Cell><Book /></Cell><HandleSlot />
      </Bar>
      <Bar h="h-[38px]">
        <HandleSlot w="w-3" /><Cell><RectHand /></Cell><HandleSlot /><Cell><SelectIc /></Cell><Down dim /><Cell><FormSel /></Cell><Down dim /><Cell><Deselect /></Cell><Down />
      </Bar>

      <main className="flex h-[565px] shrink-0">
        <aside className="flex w-[167px] shrink-0 flex-col">
          <DockTitle text="ブラウザ" w={36} />
          <div className="flex h-[30px] shrink-0 items-center pb-[3px] pl-[3px]"><Sm><AddBox /></Sm><Sm><Refresh s={16} /></Sm><Sm><Funnel /></Sm><Sm><TreeArrow /></Sm><Sm><Info /></Sm></div>
          <div className="flex h-[245px] shrink-0 flex-col border border-[#b5b5b5] bg-white">
            <div className="flex min-h-0 flex-1">
              <div className="flex-1 overflow-hidden pt-px">
                {browser.map(([t, w, icon, st]) => (
                  <div key={t} className="flex h-[18px] items-center pl-[6px]">
                    <span className="flex w-[17px] items-center">{st && <Branch open={st === 'o'} />}</span>
                    <span className="flex w-[22px] items-center">{icon}</span>
                    <Fit w={w}>{t}</Fit>
                  </div>
                ))}
                <div className="flex h-[18px] items-center pl-[26px]"><span className="flex w-[17px]"><Branch /></span><span className="flex w-[22px]"><Wire /></span><Fit w={75}>AGINFO WMS</Fit></div>
              </div>
              <VBar thumb="h-[97px]" />
            </div>
            <HBar thumb="w-24" corner />
          </div>
          <Dots />
          <DockTitle text="レイヤ" w={27} />
          <div className="flex h-[31px] shrink-0 items-center pb-[3px] pl-[3px]"><Sm><Brush /></Sm><Sm><GroupAdd /></Sm><Sm><Eye /></Sm><Sm><Funnel /></Sm><span className="flex w-[25px] justify-center text-[#b2b2b2]"><span className="text-[17px]">ε</span><span className="mt-1 text-[10px]">∩</span></span><Down dim /><span className="ml-auto pr-1"><More /></span></div>
          <div className="flex min-h-0 flex-1 flex-col overflow-hidden border border-[#b5b5b5] bg-white">
            <div className="flex h-[18px] shrink-0 items-center overflow-hidden bg-[#0078d7] pl-[6px]">
              <Branch open white />
              <svg width="14" height="14" className="ml-[9px] mr-2 shrink-0"><path d="M0 0h14v14H0z" fill="#fff" /><path d="M3.500 6.500l2.500 4L11 3" fill="none" stroke="#000" strokeWidth="2" /></svg>
              <RasterIc blue /><Fit w={100} className="ml-[6px] text-white"><span className="underline underline-offset-2">PG:dbname=raster</span></Fit>
            </div>
            <div className="flex h-[18px] shrink-0 items-center pl-[43px]"><span className="size-4 bg-black" /><span className="ml-[6px]">1</span></div>
            <div className="flex h-[18px] shrink-0 items-center pl-[65px]">1</div>
            <div className="flex h-[18px] shrink-0 items-center pl-[6px]"><Branch open /><span className="ml-[9px] mr-2 size-[14px] border border-[#b5b5b5] bg-white" /><RasterIc /><Fit w={24} className="ml-[6px] italic text-[#777]">dem</Fit></div>
            <div className="flex h-[18px] shrink-0 items-center pl-[43px]"><span className="size-4 bg-black" /><span className="ml-[6px]">0</span></div>
            <div className="flex h-[18px] shrink-0 items-center pl-[65px]"><Fit w={27}>347.4</Fit></div>
            <div className="mt-auto"><HBar thumb="w-[50px]" /></div>
          </div>
        </aside>

        <div className="flex w-[6px] shrink-0 items-center justify-center pt-2"><Handle /></div>

        <section className="mt-px w-[778px] shrink-0 overflow-hidden border border-[#b5b5b5] bg-white">
          <svg width="776" height="562" viewBox="175 169 776 562" shapeRendering="crispEdges">
            <polygon points={shore} />
            <g transform="translate(500 400) scale(.33333)">{isles.map((p) => <polygon key={p} points={p} />)}</g>
          </svg>
        </section>

        <aside className="ml-[6px] flex flex-1 flex-col">
          <DockTitle text="プロセシングツールボックス" w={120} />
          <div className="flex h-[30px] shrink-0 items-center pb-[3px] pl-[3px]"><Sm><Gears /></Sm><Sm><Python s={16} /></Sm><Sm><Clock s={16} /></Sm><Sm><PageIc /></Sm><Sep small /><Sm><EditNote /></Sm><Sep small /><Sm><Wrench s={17} /></Sm></div>
          <div className="flex h-[22px] shrink-0 items-center rounded-[3px] border border-[#aaa] bg-white pl-2 text-[#777]"><Search /><Fit w={31} className="ml-[6px]">検索...</Fit></div>
          <div className="flex h-[193px] shrink-0 border border-[#b5b5b5] bg-white">
            <div className="flex-1 overflow-hidden pt-px">
              {tools.map(([t, w], i) => (
                <div key={t} className="flex h-[18px] items-center pl-[6px]"><Branch /><span className="ml-[9px] flex w-[22px]">{i === 0 ? <Clock s={16} /> : <QLogo s={16} />}</span><Fit w={w}>{t}</Fit></div>
              ))}
            </div>
            <VBar thumb="h-[66px]" />
          </div>
          <Dots />
          <DockTitle text="地物情報" w={48} />
          <div className="flex h-[30px] shrink-0 items-center pb-[3px] pl-[3px]"><Sm><Form /></Sm><Sep small /><Sm><TreeArrow down /></Sm><Sm><TreeArrow /></Sm><Sm><TreeArrow down star /></Sm><Sep small /><Sm><Deselect s={16} /></Sm><Sep small /><Sm><PageIc dim /></Sm><Sm><Printer /></Sm><Sep small /><span className="ml-auto pr-1"><More dim /></span></div>
          <div className="flex h-44 shrink-0 flex-col border border-[#b5b5b5] bg-white">
            <div className="flex h-[19px] shrink-0 border-b border-[#b5b5b5] bg-linear-to-b from-white to-[#eee] pt-px"><span className="flex-1 pl-[2px]"><Fit w={24}>地物</Fit></span><span className="w-[19px] border-l border-[#bbb] pl-[3px]">値</span></div>
            <div className="mt-auto"><HBar thumb="w-[170px]" /></div>
          </div>
          <div className="flex h-[34px] shrink-0 items-center pl-1 pr-[5px] font-['Liberation_Sans','Noto_Sans_CJK_JP',sans-serif]"><Fit w={28}>モード</Fit><Combo w="ml-[7px] h-6 flex-1" tw={70} text="Current Layer" /></div>
          <div className="flex h-[29px] shrink-0 items-center pl-1 pr-[5px] font-['Liberation_Sans','Noto_Sans_CJK_JP',sans-serif]"><Fit w={26}>ビュー</Fit><Combo w="ml-[7px] h-[22px] w-[72px]" tw={27} text="ツリー" /><button className="ml-auto flex h-[19px] w-[45px] items-center justify-center rounded-[3px] border border-[#aaa] bg-linear-to-b from-white to-[#eee]"><Fit w={28}>ヘルプ</Fit></button></div>
        </aside>
      </main>

      <footer className="flex flex-1 items-center pl-1 font-['Liberation_Sans','Noto_Sans_CJK_JP',sans-serif] text-[11px]">
        <div className="flex h-[22px] w-[200px] shrink-0 items-center rounded-[3px] border border-[#aaa] bg-white pl-2 text-[12px] text-[#777]"><Search /><Fit w={76} className="ml-[6px]">検索(Ctrl + K)</Fit></div>
        <Fit w={154} className="ml-[7px]">1 個の凡例エントリが削除されました</Fit>
        <Fit w={21} className="ml-[101px]">座標</Fit>
        <span className="ml-1 flex h-[22px] w-[111px] shrink-0 items-center rounded-[3px] border border-[#aaa] bg-white pl-[5px]"><Fit w={96}>133.40085,34.37340</Fit></span>
        <span className="ml-1 flex shrink-0"><Ic s={16}><path d="M4 3c3-3 7-1 9 3l6 8c3 5-2 10-6 8L5 12C2 9 1 6 4 3z" fill="#ddd" stroke="#333" strokeWidth="2" /><path d="M7 5l8 14M4 9l8-6M8 14l9-6M18 6l4-4M1 17l6 6" stroke="#222" strokeWidth="2.200" /></Ic></span>
        <Fit w={20} className="ml-[13px]">縮尺</Fit>
        <div className="ml-[5px] flex h-[21px] w-[78px] shrink-0 overflow-hidden rounded-[3px] border border-[#aaa] bg-white"><span className="flex items-center pl-[2px]"><Fit w={33}>1:23371</Fit></span><span className="ml-auto flex w-[19px] items-center justify-center border-l border-[#bbb] bg-[#f3f3f3]"><Down /></span></div>
        <span className="ml-[11px] flex shrink-0"><Ic s={16}><path d="M6 12V7c0-8 12-8 12 0v5" stroke="#999" strokeWidth="2.500" /><rect x="3" y="11" width="18" height="12" rx="2" fill="#555" /></Ic></span>
        <Fit w={21} className="ml-[7px]">拡大</Fit>
        <Spin w="ml-1 w-[87px]" tw={24} text="100%" />
        <Fit w={21} className="ml-2">回転</Fit>
        <Spin w="ml-[11px] w-[82px]" tw={17} text="0.0°" />
        <svg width="14" height="14" className="ml-[7px] shrink-0"><path d="M.500.500h13v13H.500z" fill="#fff" stroke="#aaa" /><path d="M3.500 6.500l2.500 4L10.500 3" fill="none" stroke="#000" strokeWidth="1.800" /></svg>
        <Fit w={23} className="ml-[5px]">レンダ</Fit>
        <span className="ml-[18px] flex shrink-0"><Ic s={15}><circle cx="12" cy="12" r="10" fill="#aaa" stroke="#777" /><path d="M0 12h24M12 1v22M3 7h18M3 17h18M12 2c-7 6-7 14 0 20M12 2c7 6 7 14 0 20" stroke="#666" /></Ic></span>
        <Fit w={54} className="ml-1">EPSG:4612</Fit>
        <span className="ml-[19px] flex shrink-0"><Ic s={17}><path d="M12 1c14 0 15 16 6 17l3 5-8-5C-3 19-4 1 12 1z" fill="#5b5b5b" /><circle cx="7" cy="10" r="1.600" fill="#fff" /><circle cx="12" cy="10" r="1.600" fill="#fff" /><circle cx="17" cy="10" r="1.600" fill="#fff" /></Ic></span>
        <svg width="12" height="12" className="ml-auto mr-px self-end" fill="#b5b5b5"><path d="M10 1h1v1h-1zM7 4h1v1H7zM10 4h1v1h-1zM4 7h1v1H4zM7 7h1v1H7zM10 7h1v1h-1zM1 10h1v1H1zM4 10h1v1H4zM7 10h1v1H7zM10 10h1v1h-1z" /></svg>
      </footer>
    </div>
  );
}
